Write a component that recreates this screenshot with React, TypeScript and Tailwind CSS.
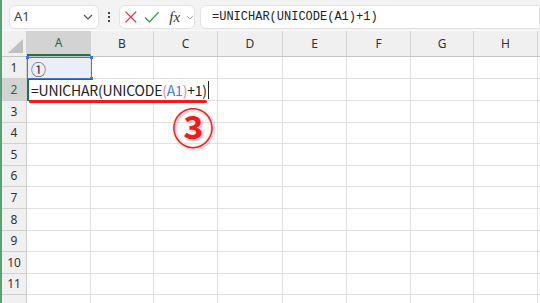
import React from 'react';

const cols = [
  { label: 'A', w: 'w-[64px]' },
  { label: 'B', w: 'w-[63px]' },
  { label: 'C', w: 'w-[64px]' },
  { label: 'D', w: 'w-[65px]' },
  { label: 'E', w: 'w-[64px]' },
  { label: 'F', w: 'w-[64px]' },
  { label: 'G', w: 'w-[63px]' },
  { label: 'H', w: 'w-[64px]' },
  { label: '', w: 'w-[64px]' },
];

const rowHeights = [
  'h-[22px]', 'h-[22px]', 'h-[22px]', 'h-[21px]', 'h-[22px]', 'h-[21px]',
  'h-[22px]', 'h-[22px]', 'h-[21px]', 'h-[22px]', 'h-[21px]', 'h-[22px]',
];

const ui = { fontFamily: '"Noto Sans", "Liberation Sans", sans-serif' };

export default function App() {
  return (
    <div className="w-[540px] h-[303px] overflow-hidden flex bg-white relative">
      <div className="w-[2px] shrink-0 bg-[#5b9f74]" />
      <div className="flex-1 flex flex-col min-w-0" style={ui}>
        {/* formula bar */}
        <div className="h-[31px] shrink-0 bg-[#f3f3f3] flex items-start pt-[5px] pl-[7px] border-b border-[#fafafa]">
          <div className="w-[90px] h-[24px] bg-white border border-[#e3e3e3] rounded-md flex items-center pl-[4px] pr-[5px]">
            <span className="text-[13px] text-[#444] flex-1">A1</span>
            <svg width="10" height="6" viewBox="0 0 10 6">
              <path d="M1 1l4 4 4-4" fill="none" stroke="#555" strokeWidth="1.2" />
            </svg>
          </div>
          <div className="w-[20px] h-[24px] flex flex-col items-center justify-center gap-[2px]">
            <span className="w-[2px] h-[2px] bg-[#444]" />
            <span className="w-[2px] h-[2px] bg-[#444]" />
            <span className="w-[2px] h-[2px] bg-[#444]" />
          </div>
          <div className="w-[76px] h-[24px] bg-white border border-[#e3e3e3] rounded-md flex items-center pl-[4px] gap-[6px]">
            <svg width="14" height="14" viewBox="0 0 14 14">
              <path d="M1.5 1.5l11 11M12.5 1.5l-11 11" stroke="#e0393e" strokeWidth="1.4" />
            </svg>
            <svg width="16" height="14" viewBox="0 0 16 14">
              <path d="M1 7.5l4.5 4.5L15 2" fill="none" stroke="#2e9b48" strokeWidth="1.4" />
            </svg>
            <span className="text-[15px] italic text-[#333] leading-none ml-[4px]" style={{ fontFamily: '"Liberation Serif", serif' }}>fx</span>
            <svg width="8" height="5" viewBox="0 0 8 5">
              <path d="M1 1l3 3 3-3" fill="none" stroke="#999" strokeWidth="1" />
            </svg>
          </div>
          <div className="flex-1 ml-[5px] h-[24px] bg-white border border-[#e3e3e3] rounded-l-md flex items-center pl-[11px]">
            <span className="text-[12px] text-[#222]" style={{ fontFamily: '"Liberation Mono", monospace' }}>
              =UNICHAR(UNICODE(A1)+1)
            </span>
          </div>
        </div>

        {/* header row */}
        <div className="h-[26px] shrink-0 flex bg-[#f0f0f0] border-b border-[#c4c4c4]">
          <div className="w-[25px] shrink-0 relative border-r border-[#d4d4d4]">
            <div className="absolute right-[3px] bottom-[3px] w-0 h-0 border-l-[15px] border-l-transparent border-b-[14px] border-b-[#c0c0c0]" />
          </div>
          {cols.map((c, i) => (
            <div
              key={i}
              className={`${c.w} shrink-0 flex items-center justify-center text-[12px] border-r border-[#d4d4d4] ${
                i === 0 ? 'bg-[#d3d3d3] text-[#1f6b40] border-b-2 border-b-[#217346]' : 'text-[#333]'
              }`}
            >
              {c.label}
            </div>
          ))}
        </div>

        {/* rows */}
        <div className="relative">
          {rowHeights.map((h, r) => (
            <div key={r} className={`${h} flex`}>
              <div
                className={`w-[25px] shrink-0 flex items-center justify-center text-[12px] border-b border-r border-[#d0d0d0] ${
                  r === 1 ? 'bg-[#d3d3d3] text-[#1f6b40]' : 'bg-[#f0f0f0] text-[#333]'
                }`}
              >
                {r < 11 ? r + 1 : ''}
              </div>
              {cols.map((c, i) => (
                <div
                  key={i}
                  className={`${c.w} shrink-0 border-b border-r border-[#e2e2e2] ${
                    r === 0 && i === 0 ? 'bg-[#e9eef8]' : ''
                  }`}
                />
              ))}
            </div>
          ))}

          {/* A1 reference highlight */}
          <div className="absolute left-[25px] top-0 w-[65px] h-[22px] border border-[#3f78d6] flex items-center pl-[3px]">
            <span className="text-[15px] text-[#333] leading-none" style={{ fontFamily: '"Noto Sans CJK JP", sans-serif' }}>①</span>
            <span className="absolute -left-[2px] -top-[2px] w-[3px] h-[3px] bg-[#3f78d6]" />
            <span className="absolute -right-[2px] -top-[2px] w-[3px] h-[3px] bg-[#3f78d6]" />
            <span className="absolute -right-[2px] -bottom-[2px] w-[3px] h-[3px] bg-[#3f78d6]" />
          </div>

          {/* A2 editing cell */}
          <div className="absolute left-[25px] top-[22px] w-[65px] h-[22px] border-2 border-[#217346]" />
          <div
            className="absolute left-[27px] top-[23px] w-[183px] h-[20px] bg-white flex items-center pl-[2px] text-[14px] tracking-[-0.2px] text-[#222] leading-none"
            style={{ fontFamily: '"Noto Sans CJK JP", "Noto Sans", sans-serif' }}
          >
            <span>=UNICHAR(UNICODE</span>
            <span className="text-[#d98a9e]">(</span>
            <span className="text-[#4a7fd4]">A1</span>
            <span className="text-[#d98a9e]">)</span>
            <span>+1)</span>
            <span className="ml-[1px] w-[1px] h-[18px] bg-[#222]" />
          </div>
          <div className="absolute left-[25px] top-[22px] w-[2px] h-[22px] bg-[#217346]" />

          {/* annotation */}
          <div className="absolute left-[27px] top-[43px] w-[178px] h-[3px] bg-[#ee1c1c] rounded-full" />
          <div
            className="absolute left-[170px] top-[48px] text-[42px] leading-none text-[#ee1c1c] font-bold"
            style={{ fontFamily: '"Noto Sans CJK JP", sans-serif', textShadow: '0 0 2px #fff, 0 0 2px #fff, 1px 1px 3px #888' }}
          >
            ③
          </div>
        </div>
      </div>
    </div>
  );
}
